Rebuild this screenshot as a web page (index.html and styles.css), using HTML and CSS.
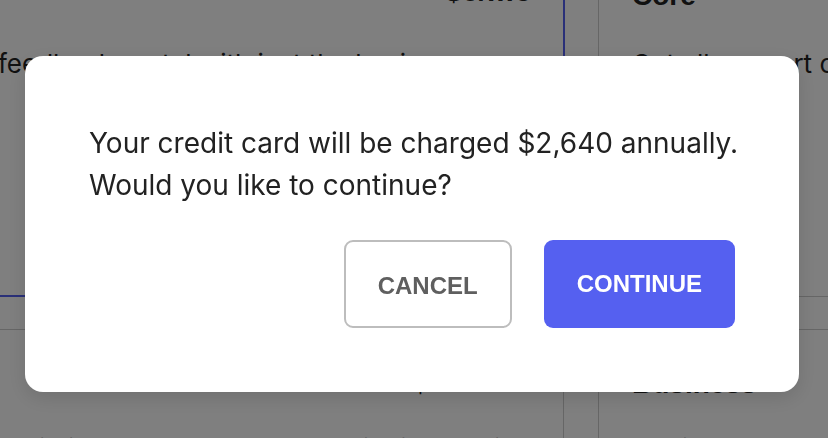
FILE: index.html
```html
<!DOCTYPE html>
<html lang="en">
<head>
<meta charset="utf-8">
<title>Confirm plan</title>
<link rel="stylesheet" href="styles.css">
</head>
<body>
<main class="tiers">
  <section class="row row-top">
    <div class="cell cell-left selected">
      <h2 class="price">$0/mo</h2>
      <p class="desc">feedback portal with just the basics</p>
    </div>
    <div class="gutter"></div>
    <div class="cell cell-right">
      <h2 class="name">Core</h2>
      <p class="desc">Get all support out of your portal</p>
    </div>
  </section>
  <div class="row band">
    <div class="cell cell-left"></div>
    <div class="gutter"></div>
    <div class="cell cell-right"></div>
  </div>
  <section class="row row-bottom">
    <div class="cell cell-left">
      <h2 class="price">$220/mo</h2>
      <p class="desc">Unlimited posts and boards with integrations</p>
    </div>
    <div class="gutter"></div>
    <div class="cell cell-right">
      <h2 class="name">Business</h2>
      <p class="desc">Dedicated support and additional seats</p>
    </div>
  </section>
</main>

<div class="overlay">
  <div class="modal" role="dialog" aria-modal="true">
    <p class="modal-text"><span class="line">Your credit card will be charged $2,640 annually.</span><span class="line">Would you like to continue?</span></p>
    <div class="actions">
      <button class="btn btn-cancel" type="button">CANCEL</button>
      <button class="btn btn-continue" type="button">CONTINUE</button>
    </div>
  </div>
</div>
</body>
</html>
```

FILE: styles.css
```css
* { box-sizing: border-box; }

html, body {
  margin: 0;
  padding: 0;
  width: 828px;
  height: 438px;
  overflow: hidden;
  background: #ffffff;
  font-family: Inter, "Noto Sans", sans-serif;
  color: #222222;
}

.tiers {
  display: flex;
  flex-direction: column;
  margin-top: -30px;
}

.row {
  display: grid;
  grid-template-columns: 564px 35px 1fr;
}

.row-top { height: 327px; }
.band { height: 33px; }
.row-bottom { height: 200px; }

.cell-left {
  border-right: 1px solid #cccccc;
  padding: 0 31px 0 0;
  text-align: right;
}

.gutter {
  border-right: 1px solid #cccccc;
}

.cell-right {
  padding: 0 0 0 33px;
}

.row-top .cell-left.selected {
  border-right: 2px solid #5560f0;
  border-bottom: 2px solid #5560f0;
  margin-right: -1px;
}

.row-top .gutter,
.row-top .cell-right {
  border-bottom: 1px solid #cccccc;
}

.band .cell-left,
.band .gutter,
.band .cell-right {
  border-bottom: 1px solid #cccccc;
}

.price {
  margin: 5px 0 0;
  font-family: "Liberation Sans", Arial, sans-serif;
  font-weight: 700;
  font-size: 30px;
  line-height: 32px;
  color: #222222;
}

.name {
  margin: 10px 0 0;
  font-family: "Liberation Sans", Arial, sans-serif;
  font-weight: 700;
  font-size: 28px;
  line-height: 32px;
  color: #222222;
}

.desc {
  margin: 0;
  font-size: 26px;
  line-height: 34px;
  white-space: nowrap;
  color: #222222;
}

.cell-left .desc {
  text-align: left;
  margin-left: -2px;
  margin-top: 40px;
}

.cell-right .desc {
  margin-top: 35px;
}

.row-bottom .price { margin-top: 36px; }
.row-bottom .name { margin-top: 38px; }
.row-bottom .cell-left .desc { margin-top: 34px; }
.row-bottom .cell-right .desc { margin-top: 32px; }

.overlay {
  position: fixed;
  inset: 0;
  background: rgba(0, 0, 0, 0.5);
  display: flex;
  align-items: flex-start;
  justify-content: flex-start;
  padding: 56px 0 0 25px;
}

.modal {
  width: 774px;
  height: 336px;
  background: #ffffff;
  border-radius: 18px;
  padding: 66px 64px 64px 64px;
  display: flex;
  flex-direction: column;
  box-shadow: 0 6px 20px rgba(0, 0, 0, 0.12);
}

.modal-text {
  margin: 0 -8px 0 0;
  font-family: Inter, "Noto Sans", sans-serif;
  font-size: 28px;
  line-height: 42px;
  color: #222222;
}

.line {
  display: block;
  white-space: nowrap;
}

.actions {
  margin-top: auto;
  display: flex;
  justify-content: flex-end;
  gap: 32px;
}

.btn {
  height: 88px;
  border-radius: 9px;
  font-family: "Liberation Sans", Arial, sans-serif;
  font-weight: 700;
  font-size: 24px;
  line-height: 24px;
  padding: 0 32px;
  cursor: pointer;
}

.btn-cancel {
  background: #ffffff;
  border: 2px solid #bdbdbd;
  color: #5f5f5f;
  padding-top: 4px;
}

.btn-continue {
  background: #5560f0;
  border: 0;
  color: #ffffff;
  padding: 0 33px;
}
```
